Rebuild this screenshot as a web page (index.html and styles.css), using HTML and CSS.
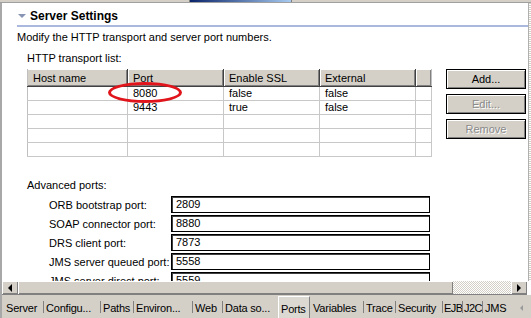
FILE: index.html
```html
<!DOCTYPE html>
<html lang="en">
<head>
    <meta charset="UTF-8">
    <title>Server Settings - Ports</title>
    <link rel="stylesheet" href="styles.css">
</head>
<body>
    <div class="window">
        <div class="topbar"><div class="title-peek"></div></div>
        <div class="editor">
            <div class="pane">
                <div class="content">
                    <div class="section-head">
                        <span class="twisty"></span>
                        <span class="section-title">Server Settings</span>
                    </div>
                    <p class="desc">Modify the HTTP transport and server port numbers.</p>

                    <div class="group">
                        <div class="group-label">HTTP transport list:</div>
                        <div class="transport">
                            <table class="grid">
                                <colgroup>
                                    <col class="c-host"><col class="c-port"><col class="c-ssl"><col class="c-ext"><col class="c-fill">
                                </colgroup>
                                <thead>
                                    <tr><th>Host name</th><th>Port</th><th>Enable SSL</th><th>External</th><th></th></tr>
                                </thead>
                                <tbody>
                                    <tr><td></td><td>8080</td><td>false</td><td>false</td><td></td></tr>
                                    <tr><td></td><td>9443</td><td>true</td><td>false</td><td></td></tr>
                                    <tr><td></td><td></td><td></td><td></td><td></td></tr>
                                    <tr><td></td><td></td><td></td><td></td><td></td></tr>
                                    <tr><td></td><td></td><td></td><td></td><td></td></tr>
                                </tbody>
                            </table>
                            <div class="buttons">
                                <button class="btn">Add...</button>
                                <button class="btn" disabled>Edit...</button>
                                <button class="btn" disabled>Remove</button>
                            </div>
                            <div class="mark"></div>
                        </div>
                    </div>

                    <div class="group advanced">
                        <div class="group-label">Advanced ports:</div>
                        <div class="ports">
                            <div class="port-row"><span class="port-label">ORB bootstrap port:</span><span class="field">2809</span></div>
                            <div class="port-row"><span class="port-label">SOAP connector port:</span><span class="field">8880</span></div>
                            <div class="port-row"><span class="port-label">DRS client port:</span><span class="field">7873</span></div>
                            <div class="port-row"><span class="port-label">JMS server queued port:</span><span class="field">5558</span></div>
                            <div class="port-row"><span class="port-label">JMS server direct port:</span><span class="field">5559</span></div>
                        </div>
                    </div>
                </div>
                <div class="vedge"></div>
            </div>

            <div class="hscroll">
                <div class="sb-btn"><span class="arr-left"></span></div>
                <div class="sb-thumb"></div>
                <div class="sb-track"></div>
                <div class="sb-btn"><span class="arr-right"></span></div>
            </div>

            <div class="tabs">
                <div class="tab first t-server">Server</div>
                <div class="tab t-config">Configu...</div>
                <div class="tab t-paths">Paths</div>
                <div class="tab t-env">Environ...</div>
                <div class="tab t-web">Web</div>
                <div class="tab t-data">Data so...</div>
                <div class="tab active t-ports">Ports</div>
                <div class="tab after-active t-vars">Variables</div>
                <div class="tab t-trace">Trace</div>
                <div class="tab t-sec">Security</div>
                <div class="tab t-ejb">EJB</div>
                <div class="tab t-j2c">J2C</div>
                <div class="tab t-jms">JMS</div>
                <div class="tab-more"><span class="arr-small"></span></div>
            </div>
        </div>
    </div>
</body>
</html>
```

FILE: styles.css
```css
body {
    margin: 0;
    width: 531px;
    height: 318px;
    overflow: hidden;
    background: #fff;
    font-family: "Liberation Sans", Arial, sans-serif;
    font-size: 11px;
    color: #000;
}
.window {
    display: flex;
    flex-direction: column;
    height: 318px;
}
.topbar {
    flex: none;
    height: 2px;
    background: #d4d0c8;
    border-bottom: 1px solid #a0a0a0;
    position: relative;
}
.title-peek {
    position: absolute;
    left: 189px;
    top: 0;
    width: 101px;
    height: 2px;
    background: linear-gradient(90deg, #0a246a, #a6caf0);
    border-left: 1px solid #808080;
    border-right: 1px solid #808080;
}
.editor {
    flex: 1;
    display: flex;
    flex-direction: column;
    border-left: 2px solid #a8a8a8;
    min-height: 0;
}
.pane {
    flex: none;
    height: 278px;
    display: flex;
}
.content {
    flex: 1;
    overflow: hidden;
    padding-left: 15px;
}
.vedge {
    width: 2px;
    border-left: 1px solid #b0b0b0;
    background: repeating-linear-gradient(0deg, #fff 0 1px, #d4d0c8 1px 2px);
}

/* section header */
.section-head {
    display: flex;
    align-items: center;
    padding-top: 4px;
    height: 18px;
    border-bottom: 2px solid #a9b8dc;
}
.twisty {
    width: 0;
    height: 0;
    margin-left: 1px;
    margin-right: 4px;
    border-left: 4px solid transparent;
    border-right: 4px solid transparent;
    border-top: 4px solid #8794b4;
}
.section-title {
    font-weight: bold;
    font-size: 12px;
}
.desc {
    margin: 3px 0 0;
    line-height: 14px;
}

.group {
    padding-left: 10px;
}
.group-label {
    margin-top: 7px;
    line-height: 14px;
}

/* transport table */
.transport {
    position: relative;
    display: flex;
    gap: 14px;
    margin-top: 4px;
}
.grid {
    border-collapse: collapse;
    table-layout: fixed;
    width: 404px;
    border-left: 1px solid #c0c0c0;
    border-bottom: 1px solid #c0c0c0;
}
.c-host { width: 100px; }
.c-port { width: 96px; }
.c-ssl { width: 96px; }
.c-ext { width: 96px; }
.c-fill { width: 16px; }
.grid th {
    height: 17px;
    padding: 0 0 0 5px;
    text-align: left;
    font-weight: normal;
    background: #d4d0c8;
    box-shadow: inset 1px 1px 0 #fff, inset -1px -1px 0 #808080;
    border-right: 1px solid #404040;
    border-bottom: 1px solid #404040;
}
.grid th:first-child {
    box-shadow: inset 0 1px 0 #fff, inset -1px -1px 0 #808080;
}
.grid th:last-child {
    border-right: 1px solid #c0c0c0;
}
.grid td {
    height: 13px;
    padding: 0 0 0 5px;
    line-height: 13px;
    border-right: 1px solid #c8c8c8;
    border-bottom: 1px solid #c8c8c8;
}
.buttons {
    display: flex;
    flex-direction: column;
    gap: 5px;
}
.btn {
    width: 80px;
    height: 20px;
    padding: 0;
    font-family: inherit;
    font-size: 11px;
    color: #000;
    background: #d4d0c8;
    border: 1px solid #000;
    box-shadow: inset 1px 1px 0 #fff, inset -1px -1px 0 #808080;
}
.btn:disabled {
    color: #8a8a8a;
    text-shadow: 1px 1px 0 #fff;
}
.mark {
    position: absolute;
    left: 81px;
    top: 13px;
    width: 68px;
    height: 15px;
    border: 3px solid #e0141a;
    border-radius: 50%;
}

/* advanced ports */
.advanced .group-label {
    margin-top: 21px;
}
.ports {
    display: flex;
    flex-direction: column;
    gap: 2px;
    margin-top: 4px;
    padding-left: 22px;
}
.port-row {
    flex: none;
    display: flex;
    align-items: center;
    height: 17px;
}
.port-label {
    width: 122px;
    white-space: nowrap;
}
.field {
    box-sizing: border-box;
    width: 259px;
    height: 17px;
    line-height: 15px;
    padding-left: 4px;
    border: 1px solid #000;
    box-shadow: inset 1px 1px 0 #404040;
}

/* horizontal scrollbar */
.hscroll {
    flex: none;
    display: flex;
    height: 13px;
    background: #d4d0c8;
    border-bottom: 1px solid #808080;
    margin-right: 4px;
}
.sb-btn {
    width: 16px;
    display: flex;
    align-items: center;
    justify-content: center;
    box-shadow: inset 1px 1px 0 #fff, inset -1px -1px 0 #808080;
}
.arr-left {
    border-top: 4px solid transparent;
    border-bottom: 4px solid transparent;
    border-right: 4px solid #000;
}
.arr-right {
    border-top: 4px solid transparent;
    border-bottom: 4px solid transparent;
    border-left: 4px solid #000;
}
.sb-thumb {
    width: 435px;
    box-shadow: inset 1px 1px 0 #fff, inset -1px -1px 0 #808080;
}
.sb-track {
    flex: 1;
    background: repeating-conic-gradient(#fff 0 25%, #d4d0c8 0 50%) 0 0 / 2px 2px;
}

/* tab strip */
.tabs {
    flex: none;
    height: 23px;
    display: flex;
    background: #d4d0c8;
}
.tab {
    flex: none;
    box-sizing: border-box;
    padding: 6px 0 0 3px;
    line-height: 14px;
    white-space: nowrap;
    letter-spacing: -0.2px;
    background: linear-gradient(#808080, #808080) left 6px / 1px 12px no-repeat;
}
.tab.first {
    background: none;
    padding-left: 4px;
}
.tab.after-active {
    background: none;
}
.tab.active {
    padding-top: 5px;
    margin-top: 1px;
    background: #dcd9d2;
    border-left: 1px solid #fff;
    border-top: 1px solid #fff;
    border-right: 1px solid #808080;
}
.t-server { width: 41px; }
.t-config { width: 57px; }
.t-paths { width: 33px; }
.t-env { width: 59px; }
.t-web { width: 30px; }
.t-data { width: 56px; }
.t-ports { width: 32px; padding-left: 2px; }
.t-vars { width: 53px; }
.t-trace { width: 32px; }
.t-sec { width: 47px; }
.t-ejb { width: 20px; padding-left: 2px; letter-spacing: -0.6px; }
.t-j2c { width: 20px; padding-left: 2px; letter-spacing: -0.6px; }
.t-jms { width: 36px; }
.tab-more {
    flex: 1;
    padding: 6px 0 0 2px;
}
.arr-small {
    display: inline-block;
    border-top: 3px solid transparent;
    border-bottom: 3px solid transparent;
    border-right: 3px solid #9a9a9a;
}
```
